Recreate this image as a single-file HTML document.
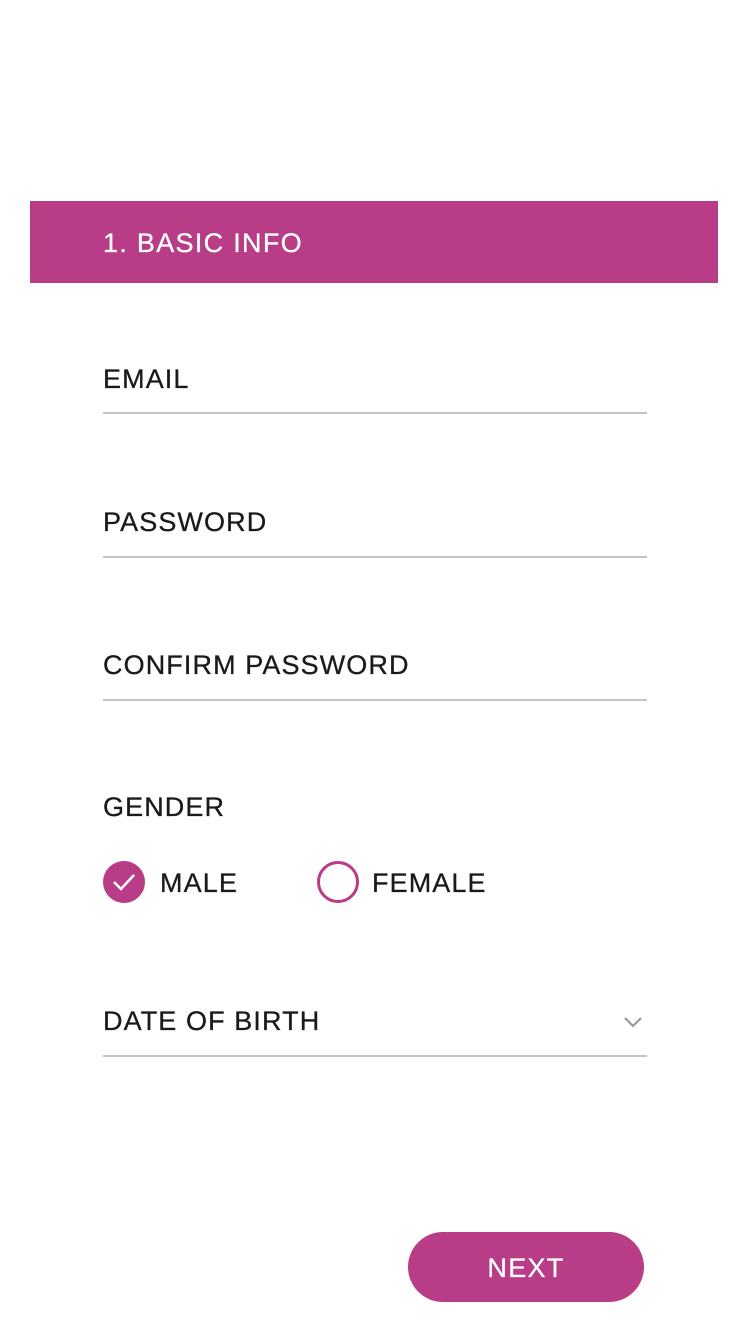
<!DOCTYPE html>
<html><head><style>
body{margin:0;width:750px;height:1334px;background:#fff;position:relative;overflow:hidden;font-family:"Liberation Sans",sans-serif;}
.t{position:absolute;font-size:27px;line-height:27px;letter-spacing:1.1px;color:#1a1a1a;white-space:nowrap;-webkit-text-stroke:0.3px #1a1a1a}
.l{position:absolute;left:103px;width:544px;height:2px;background:#c4c4c4}
</style></head><body>
<div style="position:absolute;left:30px;top:201px;width:688px;height:82px;background:#b83c86"></div>
<div class="t" style="left:103px;top:230px;color:#fff;-webkit-text-stroke:0.3px #fff;letter-spacing:1.3px">1. BASIC INFO</div>
<div class="t" style="left:103px;top:366px">EMAIL</div>
<div class="l" style="top:412px"></div>
<div class="t" style="left:103px;top:509px">PASSWORD</div>
<div class="l" style="top:556px"></div>
<div class="t" style="left:103px;top:652px">CONFIRM PASSWORD</div>
<div class="l" style="top:699px"></div>
<div class="t" style="left:103px;top:794px">GENDER</div>
<svg style="position:absolute;left:100px;top:858px" width="48" height="48"><circle cx="24" cy="24" r="21" fill="#b83c86"/><path d="M14 24 L21 31 L34 17" stroke="#fff" stroke-width="2.5" fill="none"/></svg>
<div class="t" style="left:160px;top:870px">MALE</div>
<svg style="position:absolute;left:314px;top:858px" width="48" height="48"><circle cx="24" cy="24" r="19.5" fill="none" stroke="#b83c86" stroke-width="3"/></svg>
<div class="t" style="left:372px;top:870px">FEMALE</div>
<div class="t" style="left:103px;top:1008px">DATE OF BIRTH</div>
<svg style="position:absolute;left:622px;top:1014px" width="22" height="16"><path d="M3 4 L11 12 L19 4" stroke="#999" stroke-width="2.2" fill="none"/></svg>
<div class="l" style="top:1055px"></div>
<div style="position:absolute;left:408px;top:1232px;width:236px;height:70px;border-radius:35px;background:#b83c86;color:#fff;font-size:27px;letter-spacing:1.3px;line-height:72px;text-align:center;-webkit-text-stroke:0.3px #fff">NEXT</div>
</body></html>
